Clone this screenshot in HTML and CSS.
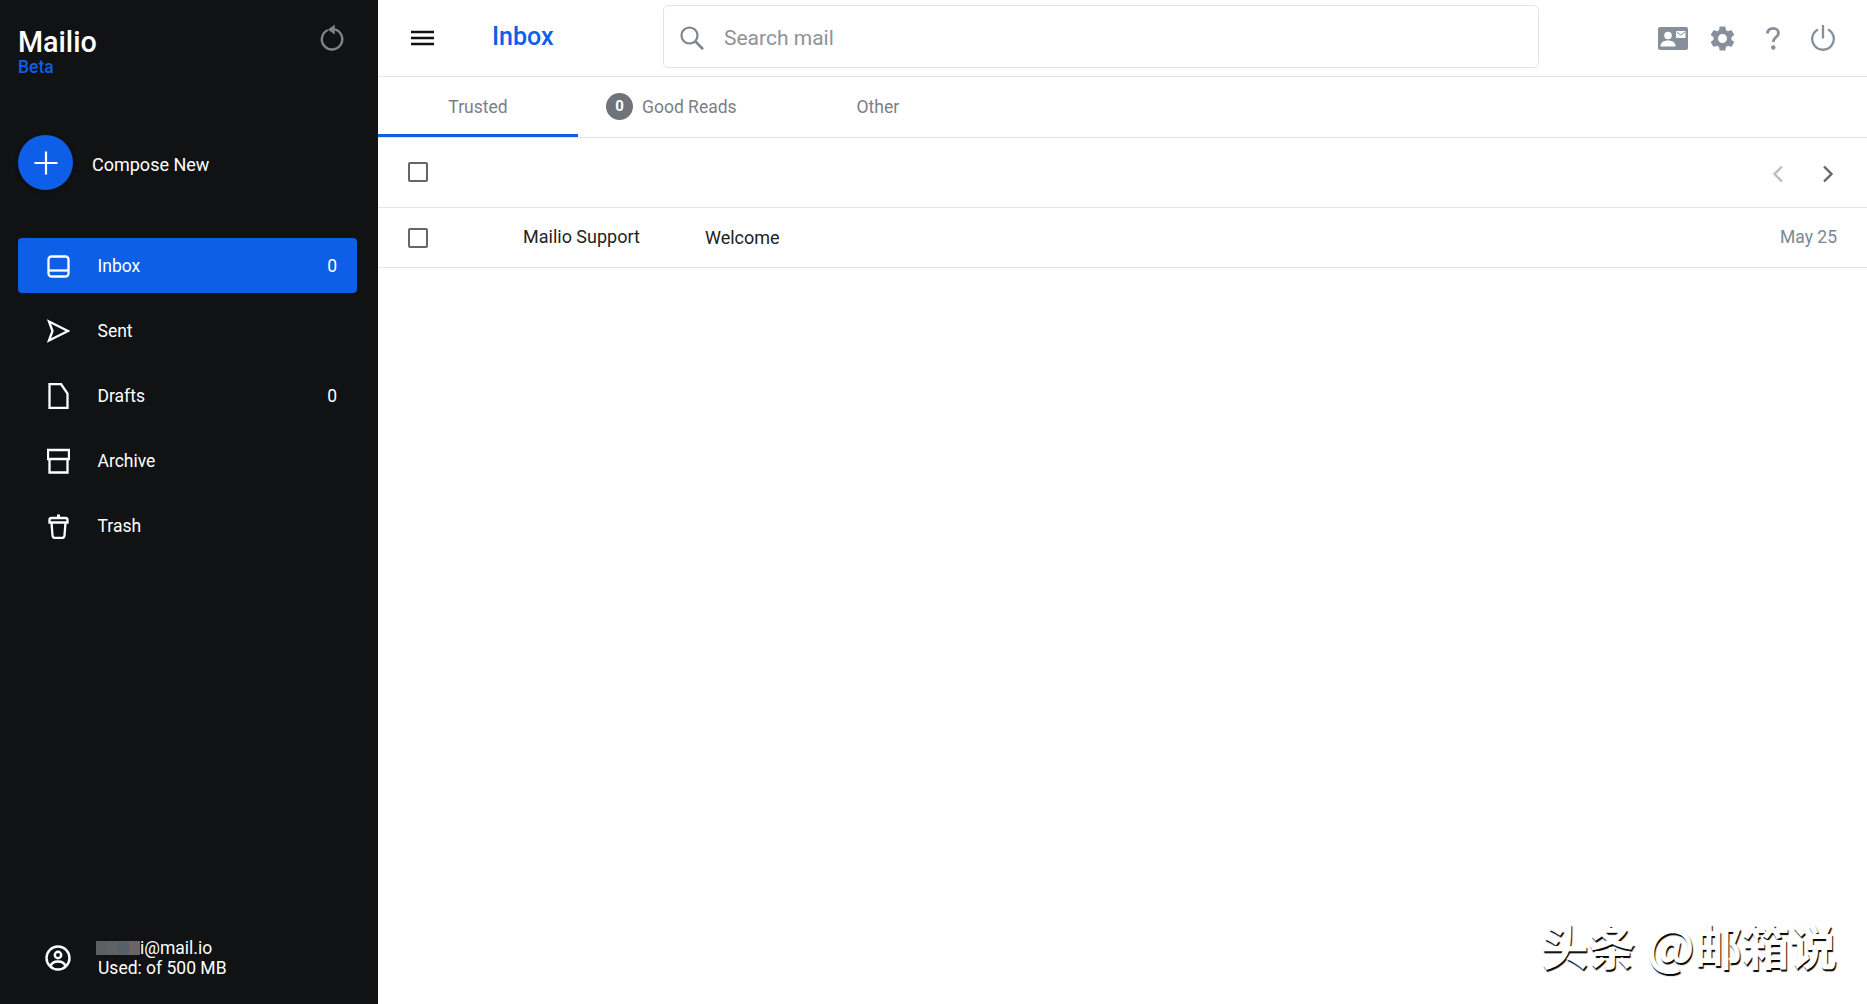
FILE: index.html
```html
<!DOCTYPE html>
<html lang="en">
<head>
    <meta charset="UTF-8">
    <title>Mailio</title>
    <link rel="stylesheet" href="styles.css">
</head>
<body>
    <aside class="sidebar">
        <div class="brand">
            <div>
                <div class="brand-name">Mailio</div>
                <div class="brand-tag">Beta</div>
            </div>
            <svg class="refresh" viewBox="0 0 28 30" fill="none">
                <path d="M9.500 6.400a11 11 0 1 0 7.500-.6" stroke="#7d8388" stroke-width="2.600"/>
                <path d="M17 0.500l-7.500 5.600 7.500 5z" fill="#7d8388"/>
            </svg>
        </div>

        <div class="compose">
            <div class="compose-btn">
                <svg viewBox="0 0 24 24" width="24" height="24"><path d="M12 0.500v23M0.500 12h23" stroke="#fff" stroke-width="2.200"/></svg>
            </div>
            <span class="compose-label">Compose New</span>
        </div>

        <nav class="nav">
            <a class="nav-item active">
                <svg viewBox="0 0 23 26" fill="none" stroke="#fff" stroke-width="2.300"><rect x="1.500" y="3.500" width="20" height="20" rx="3"/><path d="M1.500 17.500h20"/></svg>
                <span>Inbox</span><span class="count">0</span>
            </a>
            <a class="nav-item">
                <svg viewBox="0 0 23 26" fill="none" stroke="#fff" stroke-width="2.300"><path d="M2 3.500L21 13 2 22.500 5.500 13z"/></svg>
                <span>Sent</span>
            </a>
            <a class="nav-item">
                <svg viewBox="0 0 23 26" fill="none" stroke="#fff" stroke-width="2.300"><path d="M2.500 1H14l6.500 9.500V25h-18z"/></svg>
                <span>Drafts</span><span class="count">0</span>
            </a>
            <a class="nav-item">
                <svg viewBox="0 0 23 26" fill="none" stroke="#fff" stroke-width="2.300"><path d="M1 2h21v9H1zM2.500 11v13.500h18V11"/></svg>
                <span>Archive</span>
            </a>
            <a class="nav-item">
                <svg viewBox="0 0 23 26" fill="none" stroke="#fff" stroke-width="2.300"><path d="M2.500 9.500V7q0-2 2-2h14q2 0 2 2v2.500zM4.500 9.500l1 13q.2 2.500 2.500 2.500h7q2.300 0 2.500-2.500l1-13"/><path d="M11.500 1.500v3" stroke-width="3"/></svg>
                <span>Trash</span>
            </a>
        </nav>

        <div class="account">
            <svg viewBox="0 0 26 26" fill="none" stroke="#fff" stroke-width="2.400"><circle cx="13" cy="13" r="11.500"/><circle cx="13" cy="10" r="3.200"/><path d="M5.500 21.500c1-4 4-5 7.500-5s6.500 1 7.500 5"/></svg>
            <div class="account-text">
                <div class="account-mail"><span class="blur"><i class="b1"></i><i class="b2"></i><i class="b3"></i><i class="b4"></i></span>i@mail.io</div>
                <div>Used: of 500 MB</div>
            </div>
        </div>
    </aside>

    <main class="main">
        <header class="topbar">
            <svg class="menu-icon" viewBox="0 0 23 16"><path d="M0 2h23M0 8h23M0 14h23" stroke="#111" stroke-width="2.700"/></svg>
            <h1 class="page-title">Inbox</h1>
            <div class="search">
                <svg viewBox="0 0 24 24" fill="none" stroke="#7d858c" stroke-width="2.200"><circle cx="9.500" cy="9.500" r="8"/><path d="M15 15l8 8.200" stroke-width="2.600"/></svg>
                <span>Search mail</span>
            </div>
            <div class="top-actions">
                <svg class="ic-contact" viewBox="0 0 30 23"><rect width="30" height="23" rx="2" fill="#87909a"/><circle cx="10" cy="8.500" r="3.800" fill="#fff"/><path d="M2.500 19.500c0-4 3-6 7.500-6s7.500 2 7.500 6z" fill="#fff"/><rect x="18" y="4" width="9.500" height="7" fill="#fff"/><path d="M18.500 5l4.200 3 4.300-3" stroke="#87909a" fill="none"/></svg>
                <svg class="ic-gear" viewBox="2 2 20 20"><path fill="#87909a" d="M19.140 12.940c.04-.3.06-.61.06-.94 0-.32-.02-.64-.07-.94l2.030-1.580c.18-.14.23-.41.12-.61l-1.920-3.320c-.12-.22-.37-.29-.59-.22l-2.390.96c-.5-.38-1.030-.7-1.620-.94l-.36-2.540c-.04-.24-.24-.41-.48-.41h-3.840c-.24 0-.43.17-.47.41l-.36 2.540c-.59.24-1.130.57-1.620.94l-2.390-.96c-.22-.08-.47 0-.59.22L2.740 8.870c-.12.21-.08.47.12.61l2.030 1.580c-.05.3-.09.63-.09.94s.02.64.07.94l-2.030 1.580c-.18.14-.23.41-.12.61l1.920 3.320c.12.22.37.29.59.22l2.390-.96c.5.38 1.030.7 1.620.94l.36 2.540c.05.24.24.41.48.41h3.840c.24 0 .44-.17.47-.41l.36-2.540c.59-.24 1.130-.56 1.620-.94l2.390.96c.22.08.47 0 .59-.22l1.920-3.320c.12-.22.07-.47-.12-.61l-2.010-1.580zM12 15.600c-1.980 0-3.600-1.620-3.600-3.600s1.620-3.600 3.600-3.600 3.600 1.620 3.600 3.600-1.620 3.600-3.600 3.600z"/></svg>
                <svg class="ic-help" viewBox="0 0 14 23" fill="none"><path d="M1.500 6.500C1.500 3 4 1.400 7 1.400s5.500 1.800 5.500 4.600c0 4-5.200 4.200-5.200 9" stroke="#87909a" stroke-width="2.800"/><circle cx="7.300" cy="20.500" r="2.200" fill="#87909a"/></svg>
                <svg class="ic-power" viewBox="0 0 24 26" fill="none" stroke="#87909a" stroke-width="2.300"><path d="M7 4.400a10.800 10.800 0 1 0 10 0"/><path d="M12 0v13.500"/></svg>
            </div>
        </header>

        <div class="tabs">
            <div class="tab tab-trusted active">Trusted</div>
            <div class="tab tab-reads"><span class="badge">0</span>Good Reads</div>
            <div class="tab tab-other">Other</div>
        </div>

        <div class="toolbar">
            <span class="check"></span>
            <div class="pager">
                <svg viewBox="0 0 12 18" fill="none" stroke="#bbbfc2" stroke-width="2.400"><path d="M10 1.500L2.500 9l7.500 7.500"/></svg>
                <svg viewBox="0 0 12 18" fill="none" stroke="#666" stroke-width="2.400"><path d="M2 1.500L9.500 9 2 16.500"/></svg>
            </div>
        </div>

        <div class="mail-row">
            <span class="check"></span>
            <span class="sender">Mailio Support</span>
            <span class="subject">Welcome</span>
            <span class="date">May 25</span>
        </div>
    </main>

    <div class="watermark">头条 @邮箱说</div>
</body>
</html>
```

FILE: styles.css
```css
* {
    margin: 0;
    padding: 0;
    box-sizing: border-box;
}

body {
    display: flex;
    height: 100vh;
    overflow: hidden;
    font-family: Roboto, "Liberation Sans", sans-serif;
    font-size: 18px;
    background-color: #fff;
}

svg {
    display: block;
    flex-shrink: 0;
}

/* sidebar */
.sidebar {
    width: 378px;
    flex-shrink: 0;
    display: flex;
    flex-direction: column;
    padding: 0 21px 0 18px;
    background-color: #101214;
    color: #fff;
    font-size: 17.5px;
}

.brand {
    display: flex;
    justify-content: space-between;
    height: 135px;
    padding-top: 24px;
}

.brand-name {
    font-size: 28.7px;
    font-weight: 500;
    line-height: 36px;
}

.brand-tag {
    margin-top: -3px;
    color: #0d5fe8;
    font-size: 17.5px;
    font-weight: 500;
    line-height: 20px;
}

.refresh {
    width: 26px;
    height: 28px;
    margin: 0 12px 0 0;
}

.compose {
    display: flex;
    align-items: center;
    gap: 19px;
    height: 55px;
    margin-bottom: 48px;
    font-size: 18px;
}

.compose-label {
    padding-top: 4px;
}

.compose-btn {
    display: flex;
    align-items: center;
    justify-content: center;
    width: 55px;
    height: 55px;
    border-radius: 50%;
    background-color: #0d5fe8;
    box-shadow: 0 1px 4px rgba(0,0,0,0.4);
}

.nav {
    display: flex;
    flex-direction: column;
    gap: 10px;
}

.nav-item {
    display: flex;
    align-items: center;
    gap: 28px;
    height: 55px;
    padding: 0 20px 0 28.5px;
    border-radius: 4px;
}

.nav-item svg {
    width: 23px;
    height: 26px;
}

.nav-item.active {
    background-color: #0d5fe8;
}

.count {
    margin-left: auto;
}

.account {
    display: flex;
    align-items: center;
    gap: 27px;
    margin-top: auto;
    padding: 0 0 26px 27px;
}

.account svg {
    width: 26px;
    height: 26px;
}

.account-text {
    line-height: 20px;
}

.account-mail {
    display: flex;
    align-items: center;
}

.blur {
    display: flex;
    height: 14px;
    margin-left: -2px;
}

.blur i {
    display: block;
    width: 11px;
}

.b1 { background-color: #5d5f62; }
.b2 { background-color: #626265; }
.b3 { background-color: #576069; }
.b4 { background-color: #6a6563; }

/* main */
.main {
    flex: 1;
    min-width: 0;
    display: flex;
    flex-direction: column;
}

.topbar {
    display: flex;
    align-items: center;
    height: 77px;
    padding-right: 32px;
    border-bottom: 1.5px solid #e3e4e5;
}

.menu-icon {
    width: 23px;
    height: 16px;
    margin: 0 0 0 33px;
}

.page-title {
    width: 171px;
    margin: -3px 0 0 58px;
    color: #0d5fe8;
    font-size: 25px;
    font-weight: 500;
}

.search {
    display: flex;
    align-items: center;
    gap: 20px;
    width: 876px;
    height: 63px;
    margin-top: -4px;
    padding: 4px 0 0 16px;
    border: 1.5px solid #e3e4e5;
    border-radius: 5px;
    color: #8e9398;
    font-size: 21px;
}

.search svg {
    width: 24px;
    height: 24px;
}

.top-actions {
    display: flex;
    align-items: center;
    margin-left: auto;
}

.ic-contact {
    width: 30px;
    height: 23px;
}

.ic-gear {
    width: 25px;
    height: 25px;
    margin-left: 22px;
}

.ic-help {
    width: 14px;
    height: 23px;
    margin-left: 31px;
}

.ic-power {
    width: 24px;
    height: 26px;
    margin: -1px 0 0 31px;
}

.tabs {
    display: flex;
    height: 61px;
    border-bottom: 1.5px solid #e3e4e5;
    color: #7a7f85;
    font-size: 17.5px;
}

.tab {
    display: flex;
    align-items: center;
    height: 60px;
    padding-bottom: 1px;
}

.tab-trusted {
    justify-content: center;
    width: 200px;
    border-bottom: 3px solid #0d5fe8;
    padding: 2px 0 0;
}

.tab-reads {
    gap: 9px;
    margin-left: 28px;
}

.tab-other {
    margin-left: 120px;
}

.badge {
    display: flex;
    align-items: center;
    justify-content: center;
    width: 27px;
    height: 27px;
    padding-bottom: 2px;
    border-radius: 50%;
    background-color: #70737a;
    color: #fff;
    font-size: 15px;
    font-weight: 700;
}

.toolbar {
    display: flex;
    align-items: center;
    justify-content: space-between;
    height: 70px;
    padding: 0 33.5px 2px 30px;
    border-bottom: 1.5px solid #e3e4e5;
}

.check {
    width: 20px;
    height: 20px;
    border: 2px solid #666;
    border-radius: 2px;
    background-color: #fff;
}

.pager {
    display: flex;
    gap: 38px;
    margin-top: 4px;
}

.pager svg {
    width: 12px;
    height: 18px;
}

.mail-row {
    display: flex;
    align-items: center;
    height: 60px;
    padding: 0 30px;
    border-bottom: 1.5px solid #e3e4e5;
    color: #222;
}

.sender {
    width: 182px;
    margin: -2px 0 0 95px;
}

.subject {
    flex: 1;
}

.date {
    margin-top: -2px;
    color: #7b8794;
    font-size: 17.5px;
}

.watermark {
    position: absolute;
    right: 30px;
    bottom: 29px;
    color: #fff;
    font-family: "Noto Sans CJK SC", sans-serif;
    font-size: 47.5px;
    font-weight: 700;
    line-height: 60px;
    text-shadow: 1px 2px 1px #000;
}
```
